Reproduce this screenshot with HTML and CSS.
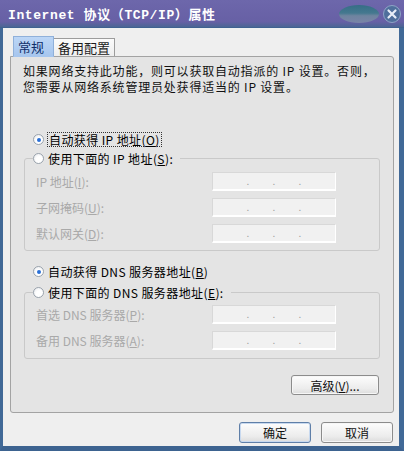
FILE: index.html
```html
<!DOCTYPE html>
<html lang="zh-CN">
<head>
  <meta charset="UTF-8">
  <title>Internet 协议 (TCP/IP) 属性</title>
  <link rel="stylesheet" href="styles.css">
</head>
<body>

<div class="window">
  <div class="titlebar">
    <span class="title">Internet 协议（TCP/IP）属性</span>
    <span class="orb"></span>
    <span class="close">
      <svg width="18" height="18" viewBox="0 0 18 18">
        <circle cx="9" cy="9" r="8.5" fill="#4f6f9c" stroke="#8ea4c6"/>
        <path d="M5.5 5.5 L12.5 12.5 M12.5 5.5 L5.5 12.5" stroke="#e8eef8" stroke-width="2.2" stroke-linecap="round"/>
      </svg>
    </span>
  </div>

  <div class="dialog">
    <div class="tabs">
      <span class="tab active">常规</span>
      <span class="tab">备用配置</span>
    </div>

    <div class="panel">
      <p class="intro">如果网络支持此功能，则可以获取自动指派的 IP 设置。否则，<br>您需要从网络系统管理员处获得适当的 IP 设置。</p>

      <div class="option">
        <span class="radio checked"></span>
        <span class="focus">自动获得 IP 地址(<u>O</u>)</span>
      </div>

      <fieldset class="group first">
        <legend><span class="radio"></span><span>使用下面的 IP 地址(<u>S</u>):</span></legend>
        <div class="field">
          <span class="label">IP 地址(<u>I</u>):</span>
          <span class="ipbox"><i>.</i><i>.</i><i>.</i></span>
        </div>
        <div class="field">
          <span class="label">子网掩码(<u>U</u>):</span>
          <span class="ipbox"><i>.</i><i>.</i><i>.</i></span>
        </div>
        <div class="field">
          <span class="label">默认网关(<u>D</u>):</span>
          <span class="ipbox"><i>.</i><i>.</i><i>.</i></span>
        </div>
      </fieldset>

      <div class="option dns">
        <span class="radio checked"></span>
        <span>自动获得 DNS 服务器地址(<u>B</u>)</span>
      </div>

      <fieldset class="group second">
        <legend><span class="radio"></span><span>使用下面的 DNS 服务器地址(<u>E</u>):</span></legend>
        <div class="field">
          <span class="label">首选 DNS 服务器(<u>P</u>):</span>
          <span class="ipbox"><i>.</i><i>.</i><i>.</i></span>
        </div>
        <div class="field">
          <span class="label">备用 DNS 服务器(<u>A</u>):</span>
          <span class="ipbox"><i>.</i><i>.</i><i>.</i></span>
        </div>
      </fieldset>

      <div class="advanced">
        <button class="btn adv">高级(<u>V</u>)...</button>
      </div>
    </div>

    <div class="footer">
      <button class="btn default">确定</button>
      <button class="btn">取消</button>
    </div>
  </div>
</div>

</body>
</html>
```

FILE: styles.css
```css
body {
  margin: 0;
  font-family: "Noto Sans CJK SC", "DejaVu Sans", sans-serif;
  font-size: 12px;
  color: #000;
  background: #416997;
}
.window {
  width: 404px;
  height: 451px;
  box-sizing: border-box;
  border-left: 3px solid #416997;
  border-right: 5px solid #416997;
  border-bottom: 5px solid #3d6390;
  background: #efefef;
  display: flex;
  flex-direction: column;
}
.titlebar {
  height: 28px;
  margin: 0 -5px 0 -3px;
  padding: 0 3px 0 8px;
  display: flex;
  align-items: center;
  background: linear-gradient(#6d67ab, #6760a5 80%, #4b6594);
  border-bottom: 1px solid #3f6190;
  box-sizing: border-box;
}
.title {
  font-family: "Liberation Mono", "Noto Sans CJK SC", monospace;
  font-weight: bold;
  font-size: 13px;
  color: #fff;
  letter-spacing: 0.6px;
}
.orb {
  margin-left: auto;
  width: 40px;
  height: 18px;
  border-radius: 50%;
  background: linear-gradient(#2c6f80 0%, #3e7c8b 45%, #6f8a9e 60%, #7d8aa8 100%);
  opacity: 0.85;
}
.close {
  display: flex;
  margin-left: 4px;
}
.dialog {
  flex: 1;
  display: flex;
  flex-direction: column;
}
.tabs {
  display: flex;
  align-items: flex-end;
  margin: 9px 0 0 10px;
  height: 19px;
  position: relative;
  z-index: 1;
}
.tab {
  height: 17px;
  padding: 0 4px;
  line-height: 17px;
  font-size: 13px;
  border: 1px solid #9c9c9c;
  border-bottom: none;
  background: linear-gradient(#fbfbfb, #eeeeee);
  color: #1d1d1d;
}
.tab.active {
  height: 19px;
  line-height: 19px;
  width: 31px;
  background: linear-gradient(#bcd6f6, #a7c6ee);
  border-color: #8fb0da;
  color: #0f2f6a;
  border-bottom: 1px solid #a7c6ee;
  margin-bottom: -1px;
}
.tab + .tab {
  border-left: none;
}
.panel {
  margin: 0 5px 0 7px;
  border: 1px solid #a3a3a3;
  border-radius: 0 3px 3px 3px;
  background: #e4e4e4;
  padding: 6px 0 14px 0;
  height: 357px;
  box-sizing: border-box;
}
.intro {
  margin: 0 0 0 12px;
  line-height: 16px;
  font-size: 12px;
  letter-spacing: 0.8px;
  color: #111;
}
.option {
  display: flex;
  align-items: center;
  height: 15px;
  margin: 37px 0 0 22px;
  gap: 3px;
}
.option.dns {
  margin-top: 13px;
  gap: 4px;
}
.option span:last-child,
.group legend span:last-child {
  letter-spacing: 0.4px;
}
.focus {
  border: 1px dotted #333;
  padding: 0 1px;
  line-height: 13px;
}
.radio {
  width: 11px;
  height: 11px;
  border-radius: 50%;
  border: 1px solid #9aa3ad;
  background: radial-gradient(circle at 60% 65%, #ffffff 40%, #e4e6ea 100%);
  box-sizing: border-box;
  display: inline-block;
  position: relative;
  flex: none;
}
.radio.checked::after {
  content: "";
  position: absolute;
  left: 3px;
  top: 3px;
  width: 4px;
  height: 4px;
  border-radius: 50%;
  background: #2a6fd6;
}
.group {
  margin: 4px 13px 0 13px;
  padding: 6px 10px 7px 11px;
  border: 1px solid #c9c9c9;
  border-radius: 3px;
  min-width: 0;
}
.group.second {
  margin-top: 6px;
  padding-top: 5px;
  padding-bottom: 8px;
}
.group legend {
  display: flex;
  align-items: center;
  gap: 4px;
  height: 15px;
  padding: 0 7px 0 0;
  margin-left: -3px;
}
.field {
  display: flex;
  align-items: center;
  height: 19px;
}
.field + .field {
  margin-top: 7px;
}
.label {
  width: 176px;
  color: #a9a9a9;
}
.ipbox {
  width: 124px;
  height: 19px;
  box-sizing: border-box;
  background: #f1f1f1;
  border-top: 1px solid #d8d8d8;
  border-left: 1px solid #d8d8d8;
  border-right: 1px solid #fff;
  border-bottom: 2px solid #fff;
  display: flex;
  justify-content: space-around;
  padding: 0 22px;
  color: #a0a0a0;
  font-size: 10px;
  line-height: 16px;
}
.ipbox i {
  font-style: normal;
}
.advanced {
  display: flex;
  justify-content: flex-end;
  margin: 16px 14px 0 0;
}
.btn {
  font-family: "Noto Sans CJK SC", "DejaVu Sans", sans-serif;
  font-size: 12px;
  color: #111;
  height: 20px;
  padding: 0;
  border: 1px solid #8c8c8c;
  border-radius: 3px;
  background: linear-gradient(#fdfdfd, #ececec 70%, #dcdcdc);
  box-shadow: inset 0 0 0 1px #f6f6f6;
}
.btn.adv {
  width: 88px;
}
.footer {
  display: flex;
  justify-content: flex-end;
  gap: 10px;
  margin: 9px 6px 0 0;
}
.footer .btn {
  width: 72px;
  height: 21px;
}
.btn.default {
  border-color: #5f7fa8;
  box-shadow: inset 0 0 0 1px #c8d9ef;
}
```
